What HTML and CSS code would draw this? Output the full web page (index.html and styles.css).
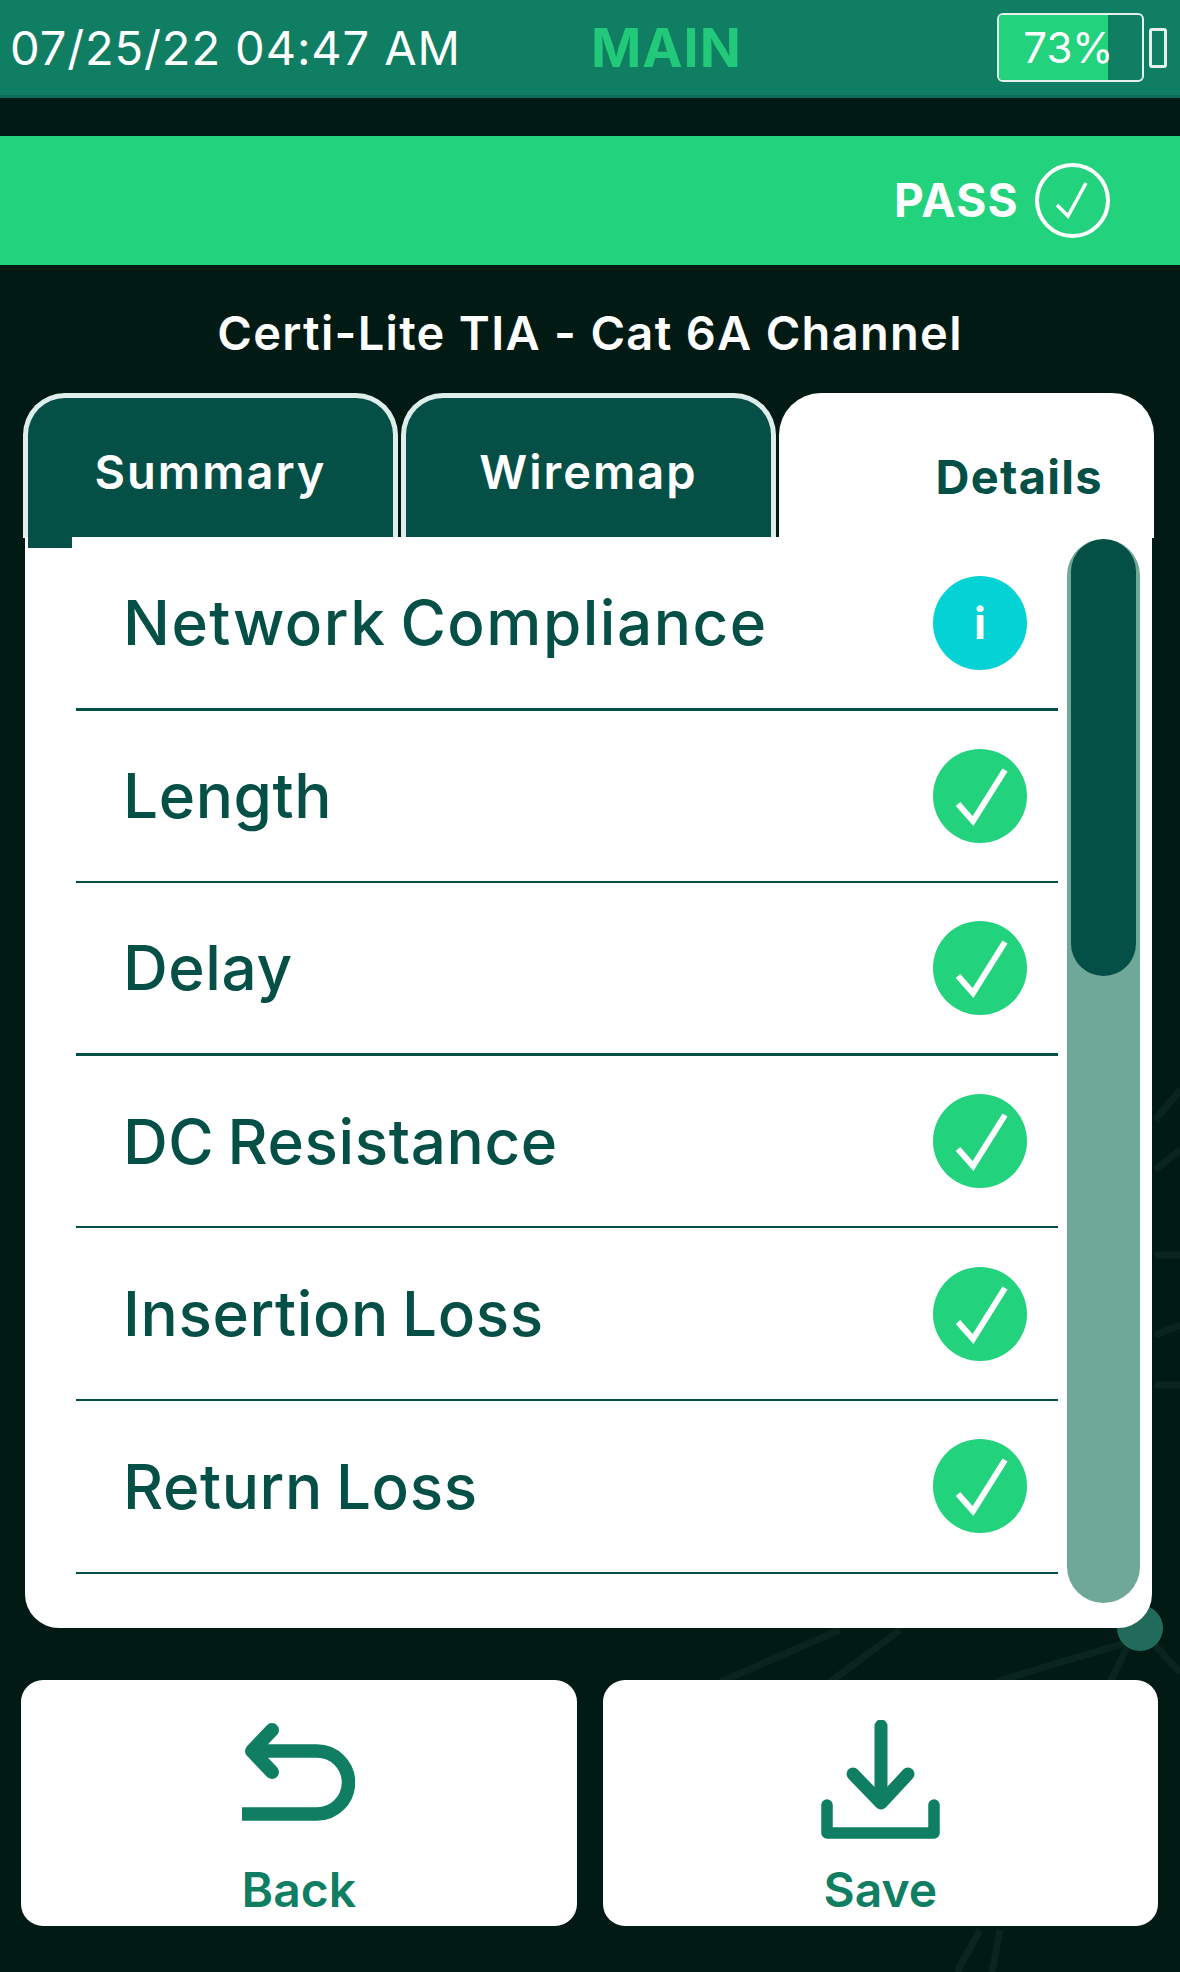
FILE: index.html
```html
<!DOCTYPE html>
<html lang="en">
<head>
    <meta charset="UTF-8">
    <meta name="viewport" content="width=device-width, initial-scale=1.0">
    <title>Certi-Lite Results</title>
    <link rel="stylesheet" href="styles.css">
</head>
<body>
    <svg class="backdrop" viewBox="0 0 1180 1972" aria-hidden="true">
        <g class="backdrop-lines">
            <path d="M1135 1640 L995 1682 M1128 1645 L1110 1682 M1150 1640 L1180 1672 M900 1630 L830 1682 M840 1630 L720 1682 M980 1930 L957 1972 M1000 1930 L992 1972 M1155 1170 L1180 1150 M1155 1255 H1180 M1155 1335 L1180 1325 M1155 1385 H1180 M1155 1120 L1180 1090"/>
        </g>
        <circle class="backdrop-node" cx="1140" cy="1628" r="23"/>
    </svg>

    <div class="screen">
        <header class="topbar">
            <span class="clock">07/25/22 04:47 AM</span>
            <span class="mode">MAIN</span>
            <div class="battery">
                <div class="battery-body">
                    <div class="battery-fill" style="width: 76%"></div>
                    <span class="battery-text">73%</span>
                </div>
                <div class="battery-nub"></div>
            </div>
        </header>

        <div class="status">
            <span class="status-text">PASS</span>
            <svg class="status-icon" viewBox="0 0 75 75">
                <circle cx="37.5" cy="37.5" r="35.5" fill="none" stroke="#fff" stroke-width="4"/>
                <path d="M22 42 L33 53 L51 20" fill="none" stroke="#fff" stroke-width="3.5"/>
            </svg>
        </div>

        <h1 class="title">Certi-Lite TIA - Cat 6A Channel</h1>

        <div class="tabs">
            <div class="tab">Summary</div>
            <div class="tab">Wiremap</div>
            <div class="tab tab-active">Details</div>
        </div>

        <main class="panel">
            <div class="results">
                <div class="row row-heavy">
                    <span class="row-label row-label-wide">Network Compliance</span>
                    <span class="badge badge-info">i</span>
                </div>
                <div class="row">
                    <span class="row-label">Length</span>
                    <svg class="badge" viewBox="0 0 94 94"><circle cx="47" cy="47" r="47" fill="#23d27d"/><path d="M25 55 L40 72 L72 21" fill="none" stroke="#fff" stroke-width="6"/></svg>
                </div>
                <div class="row row-heavy">
                    <span class="row-label">Delay</span>
                    <svg class="badge" viewBox="0 0 94 94"><circle cx="47" cy="47" r="47" fill="#23d27d"/><path d="M25 55 L40 72 L72 21" fill="none" stroke="#fff" stroke-width="6"/></svg>
                </div>
                <div class="row">
                    <span class="row-label">DC Resistance</span>
                    <svg class="badge" viewBox="0 0 94 94"><circle cx="47" cy="47" r="47" fill="#23d27d"/><path d="M25 55 L40 72 L72 21" fill="none" stroke="#fff" stroke-width="6"/></svg>
                </div>
                <div class="row">
                    <span class="row-label">Insertion Loss</span>
                    <svg class="badge" viewBox="0 0 94 94"><circle cx="47" cy="47" r="47" fill="#23d27d"/><path d="M25 55 L40 72 L72 21" fill="none" stroke="#fff" stroke-width="6"/></svg>
                </div>
                <div class="row">
                    <span class="row-label">Return Loss</span>
                    <svg class="badge" viewBox="0 0 94 94"><circle cx="47" cy="47" r="47" fill="#23d27d"/><path d="M25 55 L40 72 L72 21" fill="none" stroke="#fff" stroke-width="6"/></svg>
                </div>
            </div>
            <div class="scrollbar">
                <div class="scrollbar-thumb"></div>
            </div>
        </main>

        <footer class="actions">
            <button class="action">
                <svg class="action-back" viewBox="0 0 113 98">
                    <path d="M30 7 L10 28 L30 49" fill="none" stroke="#0f7e62" stroke-width="14" stroke-linecap="round" stroke-linejoin="round"/>
                    <path d="M12 28 H75 A31.500 31.500 0 0 1 75 91 H0" fill="none" stroke="#0f7e62" stroke-width="13.500"/>
                </svg>
                <span class="action-label">Back</span>
            </button>
            <button class="action">
                <svg class="action-save" viewBox="0 0 120 119">
                    <path d="M61 6 V80" fill="none" stroke="#0f7e62" stroke-width="13" stroke-linecap="round"/>
                    <path d="M33 54 L61 83 L88 54" fill="none" stroke="#0f7e62" stroke-width="13" stroke-linecap="round" stroke-linejoin="round"/>
                    <path d="M7 85 V113 H114 V85" fill="none" stroke="#0f7e62" stroke-width="11.500" stroke-linecap="round" stroke-linejoin="round"/>
                </svg>
                <span class="action-label">Save</span>
            </button>
        </footer>
    </div>
</body>
</html>
```

FILE: styles.css
```css
body {
    margin: 0;
    background-color: #021a14;
    font-family: Inter, "Liberation Sans", sans-serif;
    color: #fff;
}
.backdrop {
    position: absolute;
    top: 0;
    left: 0;
    width: 1180px;
    height: 1972px;
}
.backdrop-lines {
    fill: none;
    stroke: #0a251e;
    stroke-width: 7;
}
.backdrop-node {
    fill: #226b5b;
}
.screen {
    position: relative;
    height: 1972px;
    display: flex;
    flex-direction: column;
}

/* top bar */
.topbar {
    height: 98px;
    box-sizing: border-box;
    background-color: #0f7e62;
    border-bottom: 3px solid #0c6d5b;
    display: flex;
    align-items: center;
    padding: 0 13px 0 10px;
}
.clock {
    width: 581px;
    font-size: 47px;
    letter-spacing: 0.9px;
}
.mode {
    flex: 1;
    font-size: 54px;
    font-weight: 700;
    letter-spacing: 1px;
    color: #23c97a;
}
.battery {
    display: flex;
    align-items: center;
    gap: 5px;
}
.battery-body {
    position: relative;
    width: 147px;
    height: 69px;
    box-sizing: border-box;
    border: 2px solid #e6efec;
    border-radius: 6px;
    overflow: hidden;
    display: flex;
    align-items: center;
    justify-content: center;
    padding-right: 4px;
}
.battery-fill {
    position: absolute;
    top: 0;
    bottom: 0;
    left: 0;
    background-color: #23d27d;
}
.battery-text {
    position: relative;
    font-size: 42px;
}
.battery-nub {
    width: 18px;
    height: 40px;
    box-sizing: border-box;
    border: 3px solid #e6efec;
    border-radius: 3px;
}

/* pass bar */
.status {
    margin-top: 38px;
    height: 129px;
    box-sizing: border-box;
    background-color: #23d27d;
    display: flex;
    align-items: center;
    justify-content: flex-end;
    gap: 16px;
    padding-right: 70px;
}
.status-text {
    font-size: 46px;
    font-weight: 700;
    letter-spacing: 1.300px;
    margin-bottom: 2px;
}
.status-icon {
    width: 75px;
    height: 75px;
}
.title {
    margin: 0;
    height: 128px;
    line-height: 136px;
    text-align: center;
    font-size: 47px;
    font-weight: 600;
    letter-spacing: 1.300px;
}

/* tabs */
.tabs {
    display: flex;
    gap: 3px;
    height: 145px;
    padding-left: 23px;
    margin-bottom: -1px;
}
.tab {
    width: 375px;
    box-sizing: border-box;
    background-color: #044f46;
    border: 5px solid #dfeeea;
    border-bottom: none;
    border-radius: 42px 42px 0 0;
    padding-top: 45px;
    text-align: center;
    font-size: 47px;
    font-weight: 600;
    letter-spacing: 2px;
}
.tab-active {
    background-color: #fff;
    border-color: #fff;
    color: #044f46;
    padding: 50px 46px 0 0;
    text-align: right;
    font-weight: 700;
    letter-spacing: 1.300px;
}

/* results */
.panel {
    position: relative;
    margin-left: 25px;
    width: 1127px;
    height: 1091px;
    box-sizing: border-box;
    background-color: #fff;
    border-radius: 0 0 34px 34px;
    display: flex;
    padding-left: 51px;
}
.panel::before {
    content: "";
    position: absolute;
    top: 0;
    left: 3px;
    width: 44px;
    height: 11px;
    background-color: #044f46;
}
.results {
    width: 982px;
    padding-top: 1px;
}
.row {
    height: 172.6px;
    box-sizing: border-box;
    border-bottom: 2px solid #044f46;
    display: flex;
    align-items: center;
    justify-content: space-between;
    padding: 0 31px 0 47px;
    color: #044f46;
}
.row-heavy {
    border-bottom-width: 3px;
}
.row-label {
    font-size: 62px;
    font-weight: 500;
    letter-spacing: 0.6px;
    word-spacing: -4px;
}
.row-label-wide {
    letter-spacing: 1.500px;
}
.badge {
    width: 94px;
    height: 94px;
    flex: none;
}
.badge-info {
    border-radius: 50%;
    background-color: #05d2d4;
    color: #fff;
    font-size: 44px;
    font-weight: 700;
    line-height: 94px;
    text-align: center;
}
.scrollbar {
    margin: 2px 0 0 9px;
    width: 73px;
    height: 1064px;
    background-color: #6fa798;
    border-radius: 37px;
    overflow: hidden;
}
.scrollbar-thumb {
    height: 437px;
    background-color: #044f46;
    border-radius: 37px;
    margin: 0 4px;
}

/* bottom buttons */
.actions {
    display: flex;
    gap: 26px;
    margin: 52px 22px 0 21px;
}
.action {
    flex: 1;
    height: 246px;
    padding: 0;
    border: none;
    border-radius: 22px;
    background-color: #fff;
    font-family: inherit;
    display: flex;
    flex-direction: column;
    align-items: center;
}
.action-back {
    width: 113px;
    height: 98px;
    margin-top: 43px;
}
.action-save {
    width: 120px;
    height: 119px;
    margin-top: 40px;
}
.action-label {
    font-size: 48px;
    font-weight: 600;
    color: #0f7e62;
}
.action-back + .action-label {
    margin-top: 39px;
}
.action-save + .action-label {
    margin-top: 21px;
}
```
